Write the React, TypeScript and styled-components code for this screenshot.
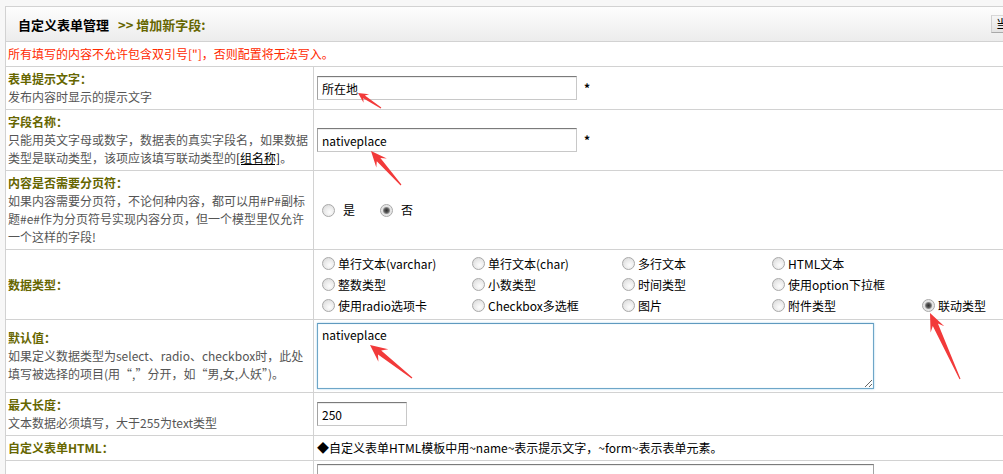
import React from 'react';
import styled, { createGlobalStyle } from 'styled-components';

const Global = createGlobalStyle`
  html, body { margin: 0; padding: 0; background: #f7f7f7; overflow: hidden; }
  body {
    font-family: "Noto Sans CJK SC", "Noto Sans", sans-serif;
    font-size: 12px;
    color: #000;
  }
`;

const LINE = '#d2d2d2';
const OLIVE = '#666600';
const FONT = '"Noto Sans CJK SC", "Noto Sans", sans-serif';

const Page = styled.div`
  position: relative;
  padding: 6px 0 0 5px;
  height: 474px;
  box-sizing: border-box;
`;

const Table = styled.div`
  width: 1050px;
  min-height: 600px;
  background: #fff;
  border-top: 1px solid ${LINE};
  border-left: 1px solid ${LINE};
  box-sizing: border-box;
`;

const Header = styled.div`
  height: 34px;
  display: flex;
  align-items: center;
  padding: 0 4px 0 12px;
  background: linear-gradient(#fdfdfd, #ececec);
  border-bottom: 1px solid ${LINE};
`;

const Title = styled.span`
  font-size: 13px;
  font-weight: bold;
  color: #000;
`;

const Crumb = styled.span`
  font-size: 13px;
  font-weight: bold;
  color: ${OLIVE};
  margin-left: 9px;
`;

const HeaderButton = styled.button`
  margin-left: auto;
  width: 60px;
  height: 18px;
  padding: 0 0 0 4px;
  text-align: left;
  font: 12px/16px ${FONT};
  border: 1px solid #c2c2c2;
  border-color: #d8d8d8 #b0b0b0 #a8a8a8 #d0d0d0;
  background: linear-gradient(#f6f6f6, #e3e3e3);
  color: #000;
  white-space: nowrap;
  overflow: hidden;
`;

const Warning = styled.div`
  padding: 3px 2px;
  line-height: 18px;
  color: #ff2a00;
  border-bottom: 1px solid ${LINE};
`;

const Row = styled.div`
  display: grid;
  grid-template-columns: 308px 1fr;
  border-bottom: 1px solid ${LINE};
`;

const LeftCell = styled.div`
  border-right: 1px solid ${LINE};
  padding: 3px 2px;
  display: flex;
  flex-direction: column;
  justify-content: center;
  line-height: 18px;
`;

const RightCell = styled.div`
  padding: 3px;
  display: flex;
  align-items: center;
  line-height: 18px;
  white-space: nowrap;
`;

const Label = styled.div`
  font-weight: bold;
  color: ${OLIVE};
`;

const Desc = styled.div`
  color: #555;
  white-space: nowrap;
`;

const Link = styled.a`
  color: #000;
  text-decoration: underline;
`;

const TextInput = styled.input<{ $w: number }>`
  width: ${p => p.$w}px;
  height: 24px;
  box-sizing: border-box;
  margin: 0;
  padding: 0 4px;
  font: 12px ${FONT};
  color: #000;
  background: #fff;
  border: 1px solid;
  border-color: #7b7b7b #c8c8c8 #c8c8c8 #a3a3a3;
  box-shadow: inset 0 1px 0 #ececec;
  outline: none;
`;

const Star = styled.span`
  margin-left: 7px;
  font-weight: bold;
`;

const TextArea = styled.textarea<{ $focus?: boolean; $h: number }>`
  display: block;
  width: 557px;
  height: ${p => p.$h}px;
  box-sizing: border-box;
  margin: 0;
  padding: 2px 4px;
  font: 12px/18px ${FONT};
  color: #000;
  background: #fff;
  resize: both;
  outline: none;
  border: 1px solid ${p => (p.$focus ? '#6ea6c8' : '#a3a3a3')};
  border-top-color: ${p => (p.$focus ? '#5f9abf' : '#7b7b7b')};
  box-shadow: ${p => (p.$focus ? '0 0 2px #a6d0ea, inset 0 0 1px #a6d0ea' : 'inset 0 1px 0 #ececec')};
`;

const Radio = styled.input.attrs({ type: 'radio' })`
  appearance: none;
  -webkit-appearance: none;
  flex: none;
  width: 13px;
  height: 13px;
  margin: 0;
  box-sizing: border-box;
  border-radius: 50%;
  border: 1px solid #a9a9a9;
  background: radial-gradient(circle at 60% 65%, #fdfdfd 0, #ececec 45%, #d4d4d4 100%);
  &:checked {
    background: radial-gradient(circle at 50% 50%, #2f2f2f 0, #555 2px, #8a8a8a 3px, #e2e2e2 4px, #f6f6f6 100%);
  }
`;

const InlineChoice = styled.label`
  display: inline-flex;
  align-items: center;
  gap: 8px;
  margin: 0 20px 0 5px;
`;

const RadioGrid = styled.div`
  display: grid;
  grid-template-columns: repeat(5, 150px);
  grid-auto-rows: 21px;
  align-items: center;
`;

const Choice = styled.label`
  display: flex;
  align-items: center;
  gap: 3px;
  padding-left: 5px;
  white-space: nowrap;
`;

const Overlay = styled.svg`
  position: absolute;
  left: 0;
  top: 0;
  pointer-events: none;
`;

const types: (string | null)[][] = [
  ['单行文本(varchar)', '单行文本(char)', '多行文本', 'HTML文本', null],
  ['整数类型', '小数类型', '时间类型', '使用option下拉框', null],
  ['使用radio选项卡', 'Checkbox多选框', '图片', '附件类型', '联动类型'],
];

function arrowPoints(
  tx: number, ty: number, ex: number, ey: number,
  hl: number, hw: number, sn: number, st: number
) {
  const dx = ex - tx;
  const dy = ey - ty;
  const L = Math.hypot(dx, dy);
  const ux = dx / L;
  const uy = dy / L;
  const nx = -uy;
  const ny = ux;
  const p = (a: number, b: number) =>
    `${(tx + ux * a + nx * b).toFixed(1)},${(ty + uy * a + ny * b).toFixed(1)}`;
  return [p(0, 0), p(hl, hw), p(hl * 0.72, sn), p(L, st), p(L, -st), p(hl * 0.72, -sn), p(hl, -hw)].join(' ');
}

const arrows = [
  [358, 93, 381, 108, 10, 5, 1.6, 0.6],
  [371, 151, 401, 185, 16, 7, 2.4, 0.6],
  [370, 345, 412, 378, 17, 8, 2.6, 0.6],
  [930, 313, 960, 379, 18, 7.5, 2.8, 0.6],
];

export default function App() {
  return (
    <>
      <Global />
      <Page>
        <Table>
          <Header>
            <Title>自定义表单管理</Title>
            <Crumb>&gt;&gt; 增加新字段:</Crumb>
            <HeaderButton>当前表单</HeaderButton>
          </Header>
          <Warning>所有填写的内容不允许包含双引号["]，否则配置将无法写入。</Warning>

          <Row>
            <LeftCell>
              <Label>表单提示文字：</Label>
              <Desc>发布内容时显示的提示文字</Desc>
            </LeftCell>
            <RightCell>
              <TextInput $w={260} defaultValue="所在地" />
              <Star>*</Star>
            </RightCell>
          </Row>

          <Row>
            <LeftCell>
              <Label>字段名称：</Label>
              <Desc>只能用英文字母或数字，数据表的真实字段名，如果数据</Desc>
              <Desc>类型是联动类型，该项应该填写联动类型的<Link>[组名称]</Link>。</Desc>
            </LeftCell>
            <RightCell>
              <TextInput $w={260} defaultValue="nativeplace" />
              <Star>*</Star>
            </RightCell>
          </Row>

          <Row>
            <LeftCell>
              <Label>内容是否需要分页符：</Label>
              <Desc>如果内容需要分页符，不论何种内容，都可以用#P#副标</Desc>
              <Desc>题#e#作为分页符号实现内容分页，但一个模型里仅允许</Desc>
              <Desc>一个这样的字段!</Desc>
            </LeftCell>
            <RightCell>
              <InlineChoice>
                <Radio name="spage" value="1" />
                是
              </InlineChoice>
              <InlineChoice>
                <Radio name="spage" value="0" defaultChecked />
                否
              </InlineChoice>
            </RightCell>
          </Row>

          <Row>
            <LeftCell>
              <Label>数据类型：</Label>
            </LeftCell>
            <RightCell>
              <RadioGrid>
                {types.flat().map((t, i) =>
                  t ? (
                    <Choice key={i}>
                      <Radio name="dtype" value={t} defaultChecked={t === '联动类型'} />
                      {t}
                    </Choice>
                  ) : (
                    <span key={i} />
                  )
                )}
              </RadioGrid>
            </RightCell>
          </Row>

          <Row>
            <LeftCell>
              <Label>默认值：</Label>
              <Desc>如果定义数据类型为select、radio、checkbox时，此处</Desc>
              <Desc>填写被选择的项目(用“,”分开，如“男,女,人妖”)。</Desc>
            </LeftCell>
            <RightCell>
              <TextArea $focus $h={66} defaultValue="nativeplace" />
            </RightCell>
          </Row>

          <Row>
            <LeftCell>
              <Label>最大长度：</Label>
              <Desc>文本数据必须填写，大于255为text类型</Desc>
            </LeftCell>
            <RightCell>
              <TextInput $w={90} defaultValue="250" />
            </RightCell>
          </Row>

          <Row>
            <LeftCell>
              <Label>自定义表单HTML：</Label>
            </LeftCell>
            <RightCell>◆自定义表单HTML模板中用~name~表示提示文字，~form~表示表单元素。</RightCell>
          </Row>

          <Row>
            <LeftCell />
            <RightCell>
              <TextArea $h={110} />
            </RightCell>
          </Row>
        </Table>

        <Overlay width={1003} height={474} viewBox="0 0 1003 474">
          {arrows.map((a, i) => (
            <polygon
              key={i}
              points={arrowPoints(a[0], a[1], a[2], a[3], a[4], a[5], a[6], a[7])}
              fill="#f23a3a"
            />
          ))}
        </Overlay>
      </Page>
    </>
  );
}
